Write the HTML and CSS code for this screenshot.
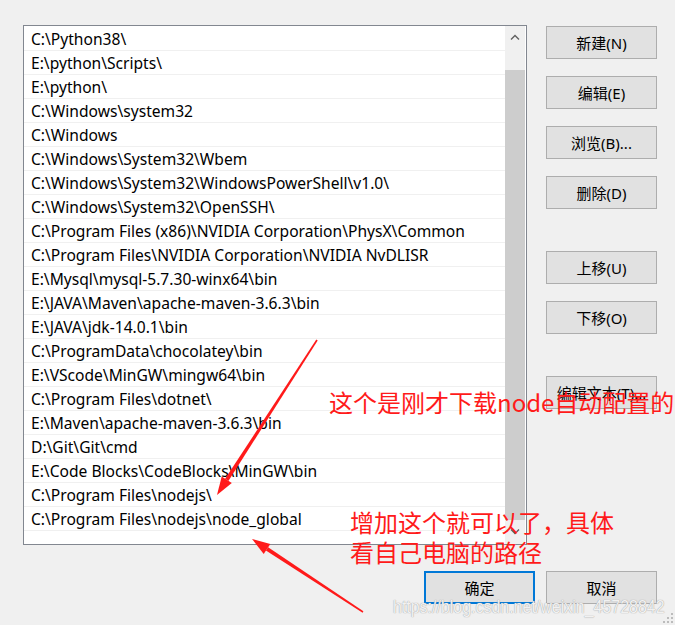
FILE: index.html
```html
<!DOCTYPE html>
<html lang="zh-CN">
<head>
    <meta charset="UTF-8">
    <meta name="viewport" content="width=device-width, initial-scale=1.0">
    <title>编辑环境变量</title>
    <link rel="stylesheet" href="styles.css">
</head>
<body>
    <div class="dialog">
        <div class="main">
            <div class="path-list">
                <div class="rows">
                    <div class="row">C:\Python38\</div>
                    <div class="row">E:\python\Scripts\</div>
                    <div class="row">E:\python\</div>
                    <div class="row">C:\Windows\system32</div>
                    <div class="row">C:\Windows</div>
                    <div class="row">C:\Windows\System32\Wbem</div>
                    <div class="row">C:\Windows\System32\WindowsPowerShell\v1.0\</div>
                    <div class="row">C:\Windows\System32\OpenSSH\</div>
                    <div class="row">C:\Program Files (x86)\NVIDIA Corporation\PhysX\Common</div>
                    <div class="row">C:\Program Files\NVIDIA Corporation\NVIDIA NvDLISR</div>
                    <div class="row">E:\Mysql\mysql-5.7.30-winx64\bin</div>
                    <div class="row">E:\JAVA\Maven\apache-maven-3.6.3\bin</div>
                    <div class="row">E:\JAVA\jdk-14.0.1\bin</div>
                    <div class="row">C:\ProgramData\chocolatey\bin</div>
                    <div class="row">E:\VScode\MinGW\mingw64\bin</div>
                    <div class="row">C:\Program Files\dotnet\</div>
                    <div class="row">E:\Maven\apache-maven-3.6.3\bin</div>
                    <div class="row">D:\Git\Git\cmd</div>
                    <div class="row">E:\Code Blocks\CodeBlocks\MinGW\bin</div>
                    <div class="row">C:\Program Files\nodejs\</div>
                    <div class="row">C:\Program Files\nodejs\node_global</div>
                </div>
                <div class="scrollbar">
                    <div class="scroll-up">
                        <svg width="10" height="6" viewBox="0 0 10 6"><path d="M1 5.5 L5 1.5 L9 5.5" fill="none" stroke="#606060" stroke-width="1.4"/></svg>
                    </div>
                    <div class="scroll-thumb"></div>
                    <div class="scroll-down">
                        <svg width="10" height="6" viewBox="0 0 10 6"><path d="M1 0.5 L5 4.5 L9 0.5" fill="none" stroke="#606060" stroke-width="1.4"/></svg>
                    </div>
                </div>
            </div>
            <div class="actions">
                <button class="btn">新建(N)</button>
                <button class="btn">编辑(E)</button>
                <button class="btn">浏览(B)...</button>
                <button class="btn">删除(D)</button>
                <button class="btn spaced">上移(U)</button>
                <button class="btn">下移(O)</button>
                <button class="btn spaced">编辑文本(T)...</button>
            </div>
        </div>
        <div class="footer">
            <button class="btn btn-default">确定</button>
            <button class="btn">取消</button>
        </div>
    </div>

    <!-- red annotations drawn on top of the screenshot -->
    <svg class="arrows" width="675" height="625" viewBox="0 0 675 625">
        <polygon points="317.7,340.4 316.3,339.6 225.1,478.8 228.4,481.0" fill="#ff1a1a"/>
        <polygon points="217,495 231.8,483.1 221.7,476.6" fill="#ff1a1a"/>
        <polygon points="363.4,611.3 362.6,612.7 265.9,550.6 268.1,547.2" fill="#ff1a1a"/>
        <polygon points="252,539 270.3,543.9 263.7,553.9" fill="#ff1a1a"/>
    </svg>
    <div class="note note-top">这个是刚才下载node自动配置的</div>
    <div class="note note-bottom">增加这个就可以了，具体<br>看自己电脑的路径</div>

    <div class="watermark">https://blog.csdn.net/weixin_45728842</div>
    <svg class="grip" width="12" height="12" viewBox="0 0 12 12">
        <rect x="8" y="0" width="2" height="2" fill="#bcbcbc"/>
        <rect x="4" y="4" width="2" height="2" fill="#bcbcbc"/>
        <rect x="8" y="4" width="2" height="2" fill="#bcbcbc"/>
        <rect x="0" y="8" width="2" height="2" fill="#bcbcbc"/>
        <rect x="4" y="8" width="2" height="2" fill="#bcbcbc"/>
        <rect x="8" y="8" width="2" height="2" fill="#bcbcbc"/>
    </svg>
</body>
</html>
```

FILE: styles.css
```css
body {
    margin: 0;
    padding: 0;
    width: 675px;
    height: 625px;
    overflow: hidden;
    position: relative;
    background-color: #f0f0f0;
    color: #000;
    font-family: "Noto Sans", "Noto Sans CJK SC", sans-serif;
    font-size: 15px;
}

.dialog {
    padding: 25px 0 0 23px;
}

.main {
    display: flex;
    gap: 19px;
}

.path-list {
    width: 504px;
    height: 520px;
    box-sizing: border-box;
    border: 1px solid #828790;
    background-color: #fff;
    padding-right: 1px;
    display: flex;
}

.rows {
    flex: 1;
    padding-top: 1px;
}

.row {
    height: 23px;
    line-height: 24px;
    padding-left: 7px;
    font-size: 15.6px;
    border-bottom: 1px solid #f0f0f0;
    white-space: nowrap;
}

.scrollbar {
    width: 20px;
    background-color: #f0f0f0;
    display: flex;
    flex-direction: column;
}

.scroll-up {
    height: 44px;
    display: flex;
    justify-content: center;
    padding-top: 8px;
    box-sizing: border-box;
}

.scroll-thumb {
    height: 450px;
    background-color: #cdcdcd;
}

.scroll-down {
    flex: 1;
    display: flex;
    justify-content: center;
    align-items: center;
}

.actions {
    display: flex;
    flex-direction: column;
    gap: 17px;
    padding-top: 1px;
}

.btn {
    width: 111px;
    height: 33px;
    box-sizing: border-box;
    border: 1px solid #adadad;
    background-color: #e1e1e1;
    color: #000;
    font-family: "Noto Sans", "Noto Sans CJK SC", sans-serif;
    font-size: 15px;
    padding: 0;
}

.btn.spaced {
    margin-top: 25px;
}

.btn-default {
    border: 2px solid #0078d7;
}

.footer {
    display: flex;
    justify-content: flex-end;
    gap: 11px;
    margin-top: 26px;
    padding-right: 18px;
}

.arrows {
    position: absolute;
    top: 0;
    left: 0;
    pointer-events: none;
}

.note {
    position: absolute;
    color: #ff1a1a;
    font-family: "Noto Sans CJK SC", sans-serif;
    font-size: 24px;
    line-height: 30px;
    white-space: nowrap;
}

.note-top {
    left: 329px;
    top: 387px;
}

.note-bottom {
    left: 350px;
    top: 507px;
}

.watermark {
    position: absolute;
    left: 393px;
    top: 595px;
    font-family: "Liberation Sans", Arial, sans-serif;
    font-size: 19px;
    line-height: 24px;
    white-space: nowrap;
    transform: scaleX(0.84);
    transform-origin: left center;
    color: rgba(255, 255, 255, 0.85);
    text-shadow: 0 0 1px #aaa, 0 0 1px #aaa;
}

.grip {
    position: absolute;
    left: 663px;
    top: 613px;
}
```
